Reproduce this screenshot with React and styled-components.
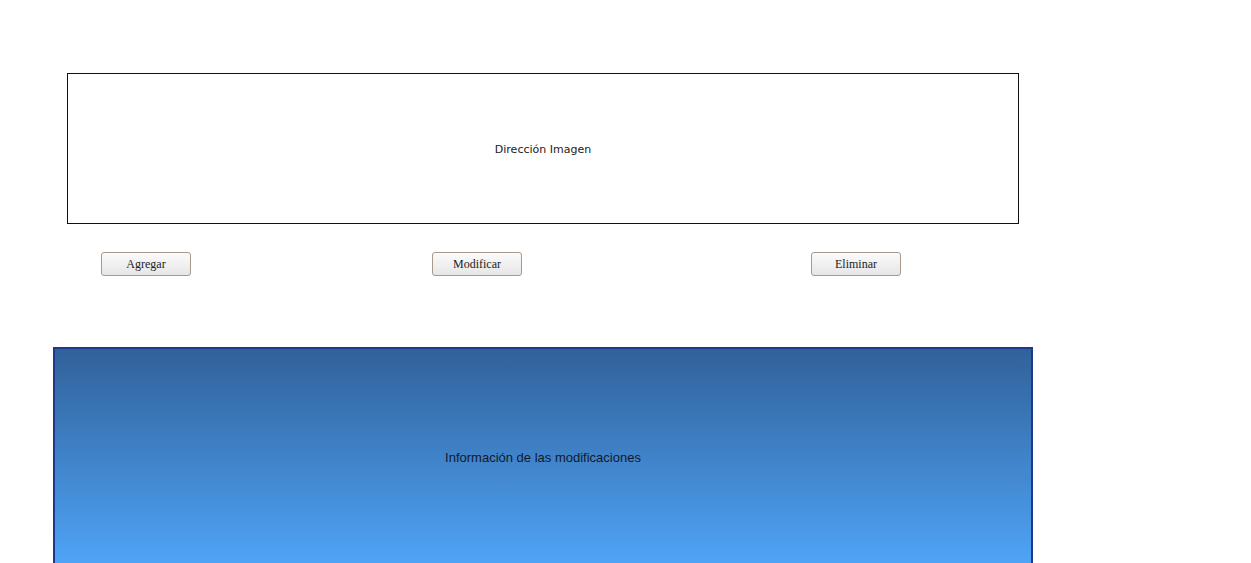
import React from 'react';
import styled, { createGlobalStyle } from 'styled-components';

const GlobalStyle = createGlobalStyle`
  html, body {
    margin: 0;
    padding: 0;
    background: #ffffff;
    overflow: hidden;
  }
`;

const Page = styled.div`
  width: 1251px;
  height: 563px;
  overflow: hidden;
  padding-top: 73px;
  box-sizing: border-box;
`;

const ImageBox = styled.div`
  margin-left: 67px;
  width: 952px;
  height: 151px;
  box-sizing: border-box;
  border: 1px solid #111;
  padding-top: 2px;
  display: flex;
  align-items: center;
  justify-content: center;
  font-family: 'Comic Sans MS', 'DejaVu Sans', sans-serif;
  font-size: 11px;
  color: #222;
`;

const ButtonRow = styled.div`
  display: flex;
  margin-top: 28px;
  padding-left: 101px;
`;

const Button = styled.button`
  margin-left: ${(p) => p.$offset || 0}px;
  width: 90px;
  height: 24px;
  box-sizing: border-box;
  border: 1px solid #a8998a;
  border-radius: 3px;
  background: linear-gradient(#fbfbfb, #e6e6e6);
  font-family: 'Liberation Serif', 'Times New Roman', serif;
  font-size: 12px;
  color: #222;
  padding: 0;
  cursor: pointer;
`;

const InfoPanel = styled.div`
  margin-top: 71px;
  margin-left: 53px;
  width: 980px;
  height: 220px;
  box-sizing: border-box;
  border: 2px solid #1c3a8c;
  background: linear-gradient(#31619a, #4fa4f7);
  display: flex;
  align-items: center;
  justify-content: center;
  font-family: 'Liberation Sans', Arial, sans-serif;
  font-size: 13px;
  color: #111a2a;
`;

export default function App() {
  return (
    <Page>
      <GlobalStyle />
      <ImageBox>Dirección Imagen</ImageBox>
      <ButtonRow>
        <Button>Agregar</Button>
        <Button $offset={241}>Modificar</Button>
        <Button $offset={289}>Eliminar</Button>
      </ButtonRow>
      <InfoPanel>Información de las modificaciones</InfoPanel>
    </Page>
  );
}
